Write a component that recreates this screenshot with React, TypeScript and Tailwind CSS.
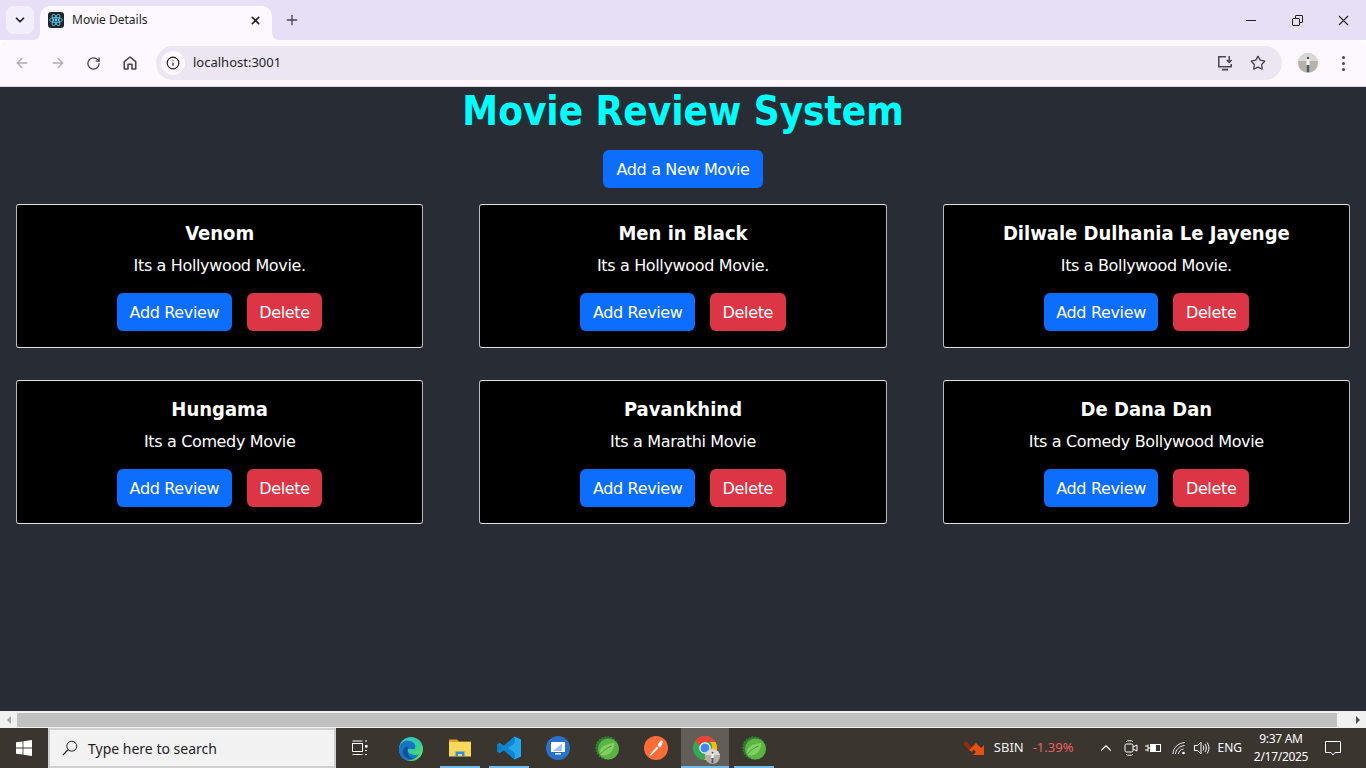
import { ArrowLeft, ArrowRight, RotateCw, Plus, X, ChevronDown, ChevronUp, Star, Info } from 'lucide-react'

const movies = [
  { title: 'Venom', text: 'Its a Hollywood Movie.' },
  { title: 'Men in Black', text: 'Its a Hollywood Movie.' },
  { title: 'Dilwale Dulhania Le Jayenge', text: 'Its a Bollywood Movie.' },
  { title: 'Hungama', text: 'Its a Comedy Movie' },
  { title: 'Pavankhind', text: 'Its a Marathi Movie' },
  { title: 'De Dana Dan', text: 'Its a Comedy Bollywood Movie' },
]

const ReactFavicon = () => (
  <svg viewBox="0 0 16 16" className="h-4 w-4 rounded-[3px] bg-[#20232a]">
    <circle cx="8" cy="8" r="1.4" fill="#61dafb" />
    <g fill="none" stroke="#61dafb" strokeWidth="0.8">
      <ellipse cx="8" cy="8" rx="6.4" ry="2.5" />
      <ellipse cx="8" cy="8" rx="6.4" ry="2.5" transform="rotate(60 8 8)" />
      <ellipse cx="8" cy="8" rx="6.4" ry="2.5" transform="rotate(120 8 8)" />
    </g>
  </svg>
)

const HomeIcon = () => (
  <svg viewBox="0 0 16 16" className="h-4 w-4" fill="none" stroke="#474551" strokeWidth="1.6">
    <path d="M2.3 14V6.6L8 2l5.7 4.6V14H10V9.2H6V14z" strokeLinejoin="round" />
  </svg>
)

const InstallIcon = () => (
  <svg viewBox="0 0 18 16" className="h-4 w-[18px]" fill="none" stroke="#474551" strokeWidth="1.5">
    <path d="M9 1.7H1.8v10h12.4V9" />
    <path d="M5 14.6h6" strokeWidth="1.8" />
    <path d="M12.2 1v6M9.8 5l2.4 2.5L14.6 5" />
  </svg>
)

const Avatar = ({ size }: { size: string }) => (
  <svg viewBox="0 0 20 20" className={size}>
    <defs>
      <clipPath id="avatar-clip">
        <circle cx="10" cy="10" r="10" />
      </clipPath>
    </defs>
    <g clipPath="url(#avatar-clip)">
      <rect width="20" height="20" fill="#b9b0a4" />
      <rect width="20" height="8" fill="#d8d8d4" />
      <rect x="8.4" y="5" width="3.2" height="7" fill="#f2f2f2" />
      <circle cx="10" cy="5" r="1.2" fill="#5a4a40" />
      <rect x="8.8" y="12" width="2.4" height="7" fill="#3f5f78" />
    </g>
  </svg>
)

const TabFlare = ({ flip }: { flip?: boolean }) => (
  <svg viewBox="0 0 8 8" className={flip ? 'absolute bottom-0 left-[-8px] h-2 w-2 -scale-x-100' : 'absolute bottom-0 right-[-8px] h-2 w-2'}>
    <path d="M0 0C0 5 3 8 8 8H0z" fill="#fdf8ff" />
  </svg>
)

const WindowsLogo = () => (
  <svg viewBox="0 0 16 16" className="h-4 w-4" fill="#fff">
    <path d="M0 2.3 6.6 1.4V7.6H0zM7.4 1.3 16 0V7.6H7.4zM0 8.4H6.6V14.6L0 13.7zM7.4 8.4H16V16L7.4 14.7z" />
  </svg>
)

const SearchGlass = () => (
  <svg viewBox="0 0 18 18" className="h-4 w-4" fill="none" stroke="#1f1f1f" strokeWidth="1.1">
    <circle cx="11" cy="7" r="5.6" />
    <path d="M6.8 11 1 17" strokeWidth="1.4" />
  </svg>
)

const TaskView = () => (
  <svg viewBox="0 0 16 16" className="h-4 w-4" fill="none" stroke="#fff" strokeWidth="1">
    <rect x="0.5" y="3.5" width="10" height="8" />
    <path d="M0.5 1h10M0.5 14.5h10M13 1h2" />
    <rect x="13" y="5" width="2.6" height="2.6" fill="#fff" stroke="none" />
    <path d="M13 10.5h2M13 14.5h2" />
  </svg>
)

const EdgeIcon = () => (
  <svg viewBox="0 0 24 24" className="h-6 w-6">
    <defs>
      <linearGradient id="edge-grad" x1="0" y1="0" x2="1" y2="1">
        <stop offset="0" stopColor="#2fc3e8" />
        <stop offset="0.6" stopColor="#36cf8f" />
        <stop offset="1" stopColor="#7ee05a" />
      </linearGradient>
    </defs>
    <circle cx="12" cy="12" r="12" fill="url(#edge-grad)" />
    <path d="M0 12C1 5 6 3 11 4c5 1 6 5 5 8H9c-1 3 2 6 7 6 2 0 3-.5 4-1-3 5-8 7-12 6C3 22 0 18 0 12z" fill="#1773c4" />
    <path d="M4 15c0-4 3-6 6-5-2 1-2 5-.5 8 1 2 3 3.500 5 4-5 1-10-2-10.500-7z" fill="#0f4f9a" />
  </svg>
)

const FolderIcon = () => (
  <svg viewBox="0 0 22 20" className="h-[20px] w-[22px]">
    <path d="M0 1.500h8l2 2h12V18H0z" fill="#e0a526" />
    <rect x="0" y="4" width="22" height="14.500" fill="#fbd75b" />
    <path d="M6.500 18.500v-5h9v5h-2.500v-2.500h-4v2.500z" fill="#2f8fdc" />
  </svg>
)

const VsCodeIcon = () => (
  <svg viewBox="0 0 24 24" className="h-6 w-6">
    <path d="M17.500 0.500 24 3.500v17l-6.500 3L7 13.800l-4 3.200-3-1.500v-7L3 7l4 3.200z" fill="#0e75b8" />
    <path d="M17.500 0.500 24 3.500v17l-6.500 3zM17.500 7 10.500 12l7 5z" fill="#23a7ee" fillRule="evenodd" />
    <path d="M0 15.500 17.500 0.500V7L3 17zM0 8.500 3 7l14.500 10v6.500z" fill="#0f85cf" />
  </svg>
)

const RemoteIcon = () => (
  <svg viewBox="0 0 24 24" className="h-6 w-6">
    <circle cx="12" cy="12" r="12" fill="#2a72c9" />
    <rect x="5" y="6" width="14" height="10" fill="#fff" />
    <path d="M7 15 16 7.500V15z" fill="#9cc4ee" />
    <rect x="9" y="17.200" width="6" height="1.300" fill="#fff" />
  </svg>
)

const SpringIcon = () => (
  <svg viewBox="0 0 24 24" className="h-6 w-6">
    <circle cx="12" cy="12" r="10.800" fill="#2f7d32" stroke="#2f7d32" strokeWidth="2" strokeDasharray="1.800 1.200" />
    <circle cx="13.500" cy="13" r="10.500" fill="#5bb344" />
    <path d="M5 18.500c-1.500-6 4-11 14.500-11.500-.5 7.500-5 12.500-11 12.500-1.500 0-2.500-.300-3.500-1z" fill="#85cf62" />
    <path d="M5 18.500c3-4 7-6.500 11.500-8.500" fill="none" stroke="#3f9a38" strokeWidth="1" />
  </svg>
)

const PostmanIcon = () => (
  <svg viewBox="0 0 24 24" className="h-6 w-6">
    <circle cx="12" cy="12" r="12" fill="#ff6c37" />
    <path d="M5.500 19 13 10.500l1.500 1.500-7.500 7.500zM13.500 9l3-4c1-1.200 2.800-.3 2.300 1.200l-2.300 5-1 .300z" fill="#fff" />
  </svg>
)

const ChromeIcon = () => (
  <svg viewBox="0 0 24 24" className="h-6 w-6">
    <circle cx="12" cy="12" r="12" fill="#34a853" />
    <path d="M12 0a12 12 0 0 1 10.400 6H12a6 6 0 0 0-5.600 3.800L2.200 4.700A12 12 0 0 1 12 0z" fill="#ea4335" />
    <path d="M22.400 6A12 12 0 0 1 11 24l5.500-8.500A6 6 0 0 0 17 6z" fill="#fbbc04" />
    <circle cx="12" cy="12" r="5.800" fill="#fff" />
    <circle cx="12" cy="12" r="4.500" fill="#4285f4" />
  </svg>
)

const StockArrow = () => (
  <svg viewBox="0 0 24 16" className="h-4 w-6">
    <path d="M0 4 3 1l6 6-3 3z" fill="#8f2a14" />
    <path d="M6 10 13 3l5 5 3-3v10H10l3-3-2.500-2.500L9 12z" fill="#e8500f" />
  </svg>
)

const MeetIcon = () => (
  <svg viewBox="0 0 14 18" className="h-[18px] w-[14px]" fill="none" stroke="#fff" strokeWidth="1">
    <rect x="1" y="5" width="8" height="8" rx="1.500" />
    <path d="M9 8l4-2v6l-4-2M2 2.500C3 1.500 8 1.500 9 2.500M2 15.500c1 1 6 1 7 0" />
  </svg>
)

const PowerIcon = () => (
  <svg viewBox="0 0 17 12" className="h-3 w-[17px]" fill="none" stroke="#fff">
    <rect x="5.500" y="2.500" width="10" height="7" />
    <rect x="5.500" y="2.500" width="5" height="7" fill="#fff" />
    <path d="M0 4h3M0 8h3M3 2.500v7M3 6h3" />
  </svg>
)

const WifiIcon = () => (
  <svg viewBox="0 0 14 14" className="h-[14px] w-[14px]" fill="none" stroke="#fff" strokeWidth="0.9">
    <path d="M1 13C1 7 6 2 13 1.500M3.500 13c0-4 4-8 9-8.500M6.500 13c0-2 2-5 5-5" />
    <circle cx="11.500" cy="12" r="1.300" fill="#fff" stroke="none" />
  </svg>
)

const VolumeIcon = () => (
  <svg viewBox="0 0 16 14" className="h-[14px] w-4" fill="none" stroke="#fff" strokeWidth="1">
    <path d="M0.500 4.500h3L7 1v12L3.500 9.500h-3z" />
    <path d="M9 4.500c1 1.500 1 3.500 0 5M11 3c1.800 2.500 1.800 5.500 0 8M13 1.500c2.500 3.500 2.500 7.500 0 11" />
  </svg>
)

const NotifyIcon = () => (
  <svg viewBox="0 0 16 15" className="h-[15px] w-4" fill="none" stroke="#fff" strokeWidth="1">
    <path d="M0.500 0.500h15v11H10l-2 2.500-2-2.500H0.500z" />
  </svg>
)

function MovieCard({ title, text }: { title: string; text: string }) {
  return (
    <div className="flex h-[144px] flex-col items-center rounded-[3px] border border-x-[#b8b8b8] border-y-[#e0e0e0] bg-black pt-[16px]">
      <h3 className="font-['DejaVu_Sans_Condensed',sans-serif] text-[20px] leading-[24px] font-bold text-white">{title}</h3>
      <p className="mt-[9px] text-[16px] leading-[24px] tracking-[-0.35px] text-white">{text}</p>
      <div className="mt-[15px] flex gap-[15px]">
        <button className="h-[38px] rounded-[6px] bg-[#0d6efd] px-[12.5px] pt-px text-[16px] tracking-[-0.35px] text-white">Add Review</button>
        <button className="h-[38px] rounded-[6px] bg-[#dc3545] px-[12.5px] pt-px text-[16px] tracking-[-0.35px] text-white">Delete</button>
      </div>
    </div>
  )
}

export default function App() {
  return (
    <div className="flex h-screen flex-col overflow-hidden font-['Noto_Sans',sans-serif]">
      {/* Browser tab strip */}
      <div className="flex h-10 shrink-0 items-end bg-[#e6dff6] pl-[6px]">
        <div className="mb-[6px] flex h-7 w-7 items-center justify-center rounded-[8px] bg-[#f3eefc]">
          <ChevronDown size={14} strokeWidth={3} color="#1f1f1f" />
        </div>
        <div className="relative ml-[6px] flex h-[34px] w-[232px] items-center rounded-t-[10px] bg-[#fdf8ff] pb-[6px] pl-[8px] pr-[10px]">
          <TabFlare flip />
          <ReactFavicon />
          <span className="ml-[8px] flex-1 text-[12px] text-[#1f1f1f]">Movie Details</span>
          <X size={13} strokeWidth={3} color="#1f1f1f" />
          <TabFlare />
        </div>
        <div className="mb-[11px] ml-[11px] flex h-[18px] w-[18px] items-center justify-center">
          <Plus size={16} strokeWidth={2} color="#474551" />
        </div>
        <div className="mb-[11px] ml-auto flex h-[18px] items-center text-[#1f1f1f]">
          <div className="h-px w-[10px] bg-[#1f1f1f]" />
          <div className="relative ml-[36px] h-[11px] w-[11px]">
            <div className="absolute right-0 top-0 h-[8px] w-[8px] rounded-[1px] border border-[#1f1f1f]" />
            <div className="absolute bottom-0 left-0 h-[8px] w-[8px] rounded-[1px] border border-[#1f1f1f] bg-[#e6dff6]" />
          </div>
          <X size={17} strokeWidth={1.5} className="ml-[32px] mr-[14px]" />
        </div>
      </div>

      {/* Browser toolbar */}
      <div className="flex h-[47px] shrink-0 items-center rounded-t-[8px] border-b border-[#d9d4e0] bg-[#fdf8ff] pl-[14px]">
        <ArrowLeft size={16} strokeWidth={2} color="#aeabb4" />
        <ArrowRight size={16} strokeWidth={2} color="#aeabb4" className="ml-[20px]" />
        <RotateCw size={15} strokeWidth={2} color="#474551" className="ml-[20px]" />
        <div className="ml-[21px]">
          <HomeIcon />
        </div>
        <div className="ml-[18px] flex h-[34px] w-[1126px] items-center rounded-full bg-[#ece6f3] pl-[5px] pr-[16px]">
          <div className="flex h-6 w-6 items-center justify-center rounded-full bg-[#fdf8ff]">
            <Info size={14} strokeWidth={2} color="#1f1f1f" />
          </div>
          <span className="ml-[8px] flex-1 text-[13px] text-[#1f1f1f]">localhost:3001</span>
          <InstallIcon />
          <Star size={16} strokeWidth={2} color="#474551" className="ml-[15px]" />
        </div>
        <div className="ml-[16px]">
          <Avatar size="h-5 w-5" />
        </div>
        <div className="ml-[24px] flex flex-col gap-[3px]">
          <span className="h-[3px] w-[3px] rounded-full bg-[#474551]" />
          <span className="h-[3px] w-[3px] rounded-full bg-[#474551]" />
          <span className="h-[3px] w-[3px] rounded-full bg-[#474551]" />
        </div>
      </div>

      {/* Page */}
      <main className="min-h-0 flex-1 bg-[#282c34] px-4 font-['DejaVu_Sans',sans-serif]">
        <h1 className="text-center font-['DejaVu_Sans_Condensed',sans-serif] text-[40px] leading-[48px] font-bold text-[#00ffff]">Movie Review System</h1>
        <div className="mt-[15px] flex justify-center">
          <button className="h-[38px] w-[160px] rounded-[6px] bg-[#0d6efd] pt-px text-[16px] tracking-[-0.35px] text-white">Add a New Movie</button>
        </div>
        <div className="mt-4 grid grid-cols-3 gap-x-[56px] gap-y-[32px]">
          {movies.map((m) => (
            <MovieCard key={m.title} title={m.title} text={m.text} />
          ))}
        </div>
      </main>

      {/* Horizontal scrollbar */}
      <div className="flex h-[17px] shrink-0 items-center bg-[#f1f1f1]">
        <div className="flex w-[17px] justify-center">
          <div className="h-0 w-0 border-y-[4px] border-r-[4px] border-y-transparent border-r-[#a3a3a3]" />
        </div>
        <div className="h-[14px] w-[1320px] bg-[#c1c1c1]" />
        <div className="ml-auto flex w-[17px] justify-center">
          <div className="h-0 w-0 border-y-[4px] border-l-[4px] border-y-transparent border-l-[#505050]" />
        </div>
      </div>

      {/* Windows taskbar */}
      <div className="flex h-10 shrink-0 items-center bg-[#3b3530] font-['Noto_Sans',sans-serif] text-white">
        <div className="flex w-12 justify-center">
          <WindowsLogo />
        </div>
        <div className="flex h-10 w-[288px] items-center border-2 border-[#d0d0d0] bg-[#f2f2f2] pl-[12px]">
          <SearchGlass />
          <span className="ml-[10px] text-[14px] text-[#1f1f1f]">Type here to search</span>
        </div>
        <div className="flex w-[48px] justify-center">
          <TaskView />
        </div>
        <div className="flex h-10 items-center">
          <div className="ml-[7px] flex h-10 w-[40px] items-center justify-center pt-[1px]"><EdgeIcon /></div>
          <div className="relative ml-[9px] flex h-10 w-[40px] items-center justify-center">
            <FolderIcon />
            <span className="absolute bottom-0 h-[2px] w-[40px] bg-[#76b9ed]" />
          </div>
          <div className="relative ml-[9px] flex h-10 w-[40px] items-center justify-center">
            <VsCodeIcon />
            <span className="absolute bottom-0 h-[2px] w-[40px] bg-[#76b9ed]" />
          </div>
          <div className="ml-[9px] flex h-10 w-[40px] items-center justify-center"><RemoteIcon /></div>
          <div className="ml-[9px] flex h-10 w-[40px] items-center justify-center"><SpringIcon /></div>
          <div className="ml-[9px] flex h-10 w-[40px] items-center justify-center"><PostmanIcon /></div>
          <div className="relative ml-[5px] flex h-10 w-[48px] items-center justify-center bg-[#625d59]">
            <ChromeIcon />
            <div className="absolute bottom-[4px] right-[9px]">
              <Avatar size="h-[15px] w-[15px]" />
            </div>
            <span className="absolute bottom-0 h-[2px] w-[48px] bg-[#76b9ed]" />
          </div>
          <div className="relative ml-[5px] flex h-10 w-[40px] items-center justify-center">
            <SpringIcon />
            <span className="absolute bottom-0 h-[2px] w-[40px] bg-[#76b9ed]" />
          </div>
        </div>
        <div className="ml-auto flex h-10 items-center">
          <StockArrow />
          <span className="ml-[7px] text-[13px] text-[#f0f0f0]">SBIN</span>
          <span className="ml-[9px] text-[13px] text-[#e8605f]">-1.39%</span>
          <ChevronUp size={18} strokeWidth={1.5} className="ml-[24px]" />
          <div className="ml-[9px]"><MeetIcon /></div>
          <div className="ml-[7px]"><PowerIcon /></div>
          <div className="ml-[10px]"><WifiIcon /></div>
          <div className="ml-[8px]"><VolumeIcon /></div>
          <span className="ml-[7px] text-[12px]">ENG</span>
          <div className="ml-[12px] flex w-[54px] flex-col items-center text-[12px] leading-[18px] tracking-[-0.3px]">
            <span>9:37 AM</span>
            <span>2/17/2025</span>
          </div>
          <div className="ml-[17px] mr-[25px]"><NotifyIcon /></div>
        </div>
      </div>
    </div>
  )
}
